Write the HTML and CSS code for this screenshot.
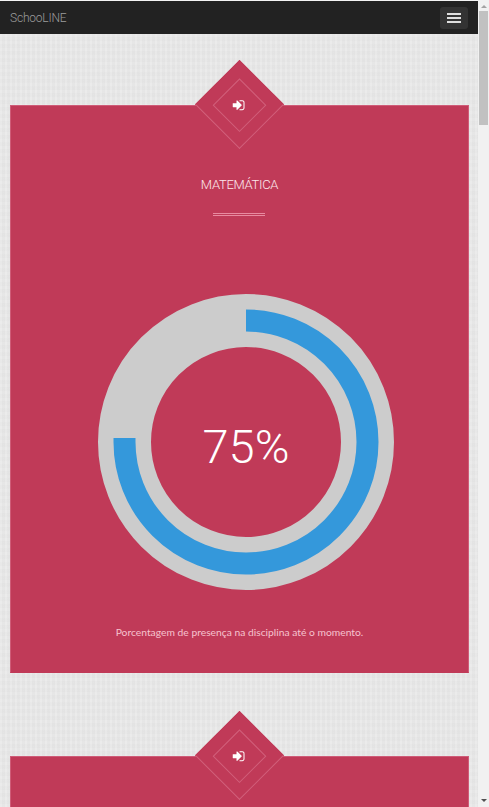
FILE: index.html
```html
<!DOCTYPE html>
<html lang="pt-BR">
<head>
  <meta charset="UTF-8" />
  <meta name="viewport" content="width=device-width, initial-scale=1.0">
  <title>SchooLINE</title>
  <link rel="stylesheet" href="styles.css">
</head>
<body>
  <div class="app">
    <div class="page">
      <nav class="navbar">
        <a class="brand" href="#">SchooLINE</a>
        <button class="toggle" type="button" aria-label="Menu">
          <span></span><span></span><span></span>
        </button>
      </nav>

      <main class="list">
        <section class="card">
          <div class="badge">
            <div class="badge-inner"></div>
            <svg class="badge-icon" viewBox="0 0 1792 1792"><path d="M1184 896q0 26-19 45l-544 544q-19 19-45 19t-45-19-19-45v-288h-448q-26 0-45-19t-19-45v-384q0-26 19-45t45-19h448v-288q0-26 19-45t45-19 45 19l544 544q19 19 19 45zm352-352v704q0 119-84.5 203.5t-203.5 84.5h-320q-13 0-22.5-9.5t-9.5-22.5q0-4-1-20t-.5-26.5 3-23.5 10-19.5 20.5-6.5h320q66 0 113-47t47-113v-704q0-66-47-113t-113-47h-312l-11.5-1-11.5-3-8-5.5-7-9-2-13.5q0-4-1-20t-.5-26.5 3-23.5 10-19.5 20.5-6.5h320q119 0 203.5 84.5t84.5 203.5z"/></svg>
          </div>
          <h2 class="card-title">MATEMÁTICA</h2>
          <div class="divider"></div>
          <div class="ring">
            <svg viewBox="0 0 296 296" width="296" height="296">
              <circle class="ring-track" cx="148" cy="148" r="121.5"/>
              <path class="ring-value" d="M148 26.5A121.5 121.5 0 1 1 26.5 148L26.5 144"/>
            </svg>
            <span class="ring-label">75%</span>
          </div>
          <p class="card-note">Porcentagem de presença na disciplina até o momento.</p>
        </section>

        <section class="card">
          <div class="badge">
            <div class="badge-inner"></div>
            <svg class="badge-icon" viewBox="0 0 1792 1792"><path d="M1184 896q0 26-19 45l-544 544q-19 19-45 19t-45-19-19-45v-288h-448q-26 0-45-19t-19-45v-384q0-26 19-45t45-19h448v-288q0-26 19-45t45-19 45 19l544 544q19 19 19 45zm352-352v704q0 119-84.5 203.5t-203.5 84.5h-320q-13 0-22.5-9.5t-9.5-22.5q0-4-1-20t-.5-26.5 3-23.5 10-19.5 20.5-6.5h320q66 0 113-47t47-113v-704q0-66-47-113t-113-47h-312l-11.5-1-11.5-3-8-5.5-7-9-2-13.5q0-4-1-20t-.5-26.5 3-23.5 10-19.5 20.5-6.5h320q119 0 203.5 84.5t84.5 203.5z"/></svg>
          </div>
        </section>
      </main>
    </div>

    <div class="scrollbar">
      <span class="arrow-up"></span>
      <div class="thumb"></div>
      <span class="arrow-down"></span>
    </div>
  </div>
</body>
</html>
```

FILE: styles.css
```css
html, body {
  margin: 0;
  height: 100%;
  overflow: hidden;
}
body {
  font-family: Roboto, "Liberation Sans", sans-serif;
  background: #e8e8e8;
}
.app {
  display: flex;
  height: 807px;
}
.page {
  flex: 1;
  min-width: 0;
  overflow: hidden;
  background-color: #e7e7e7;
  background-image:
    repeating-linear-gradient(90deg, rgba(255,255,255,0.13) 0 2px, rgba(0,0,0,0.008) 2px 5px),
    repeating-linear-gradient(0deg, rgba(255,255,255,0.05) 0 3px, rgba(0,0,0,0.006) 3px 7px);
}

.navbar {
  height: 33px;
  border-top: 1px solid #f4f4f4;
  background: #222;
  display: flex;
  align-items: center;
  justify-content: space-between;
  padding: 0 10px;
}
.brand {
  color: #9d9d9d;
  font-size: 12px;
  font-weight: 300;
  letter-spacing: -0.2px;
  text-decoration: none;
}
.toggle {
  width: 28px;
  height: 22px;
  background: #333;
  border: none;
  border-radius: 3px;
  padding: 0;
  display: flex;
  flex-direction: column;
  align-items: center;
  justify-content: center;
  gap: 2px;
}
.toggle span {
  width: 14px;
  height: 2px;
  background: #dedede;
}

.list {
  padding: 71px 9px 0 10px;
}
.card {
  position: relative;
  height: 568px;
  margin-bottom: 83px;
  box-sizing: border-box;
  background: #c03a58;
  border: 1px solid #cf5c78;
  border-bottom-color: #c03a58;
  text-align: center;
  padding-top: 69px;
}
.badge {
  position: absolute;
  left: 197px;
  top: -33px;
  width: 63px;
  height: 63px;
  box-sizing: border-box;
  background: #c03a58;
  border: 1px solid #d1607b;
  border-top-color: #c03a58;
  border-left-color: #c03a58;
  transform: rotate(45deg);
  display: flex;
  align-items: center;
  justify-content: center;
}
.badge-inner {
  width: 38px;
  height: 38px;
  box-sizing: border-box;
  border: 1px solid #d1607b;
}
.badge-icon {
  position: absolute;
  left: 50%;
  top: 50%;
  width: 14px;
  height: 14px;
  margin: -7px 0 0 -7px;
  fill: #fff;
  transform: rotate(-45deg);
}

.card-title {
  margin: 0;
  color: #fde8ec;
  font-size: 13px;
  font-weight: 300;
  letter-spacing: -0.3px;
  line-height: 20px;
}
.divider {
  width: 52px;
  height: 1px;
  margin: 18px 0 0 202px;
  border-top: 1px solid #e88aa0;
  border-bottom: 1px solid #e88aa0;
}
.ring {
  position: relative;
  width: 296px;
  height: 296px;
  margin: 78px 0 0 87px;
}
.ring svg {
  display: block;
}
.ring-track {
  fill: none;
  stroke: #ccc;
  stroke-width: 53;
}
.ring-value {
  fill: none;
  stroke: #3498db;
  stroke-width: 22;
}
.ring-label {
  position: absolute;
  left: 0;
  right: 0;
  top: 50%;
  transform: translateY(-50%);
  color: #fff;
  font-size: 47px;
  font-weight: 300;
  line-height: 56px;
  margin-top: 5px;
}
.card-note {
  margin: 34px 0 0;
  color: #f6c3cf;
  font-family: Lato, Roboto, sans-serif;
  font-size: 10.3px;
  line-height: 16px;
}

.scrollbar {
  width: 11px;
  background: #f1f1f1;
  display: flex;
  flex-direction: column;
  align-items: center;
}
.arrow-up, .arrow-down {
  width: 0;
  height: 0;
  border-left: 3px solid transparent;
  border-right: 3px solid transparent;
}
.arrow-up {
  margin-top: 5px;
  border-bottom: 3px solid #a3a3a3;
}
.arrow-down {
  margin-top: auto;
  margin-bottom: 5px;
  border-top: 3px solid #505050;
}
.thumb {
  width: 9px;
  height: 114px;
  margin-top: 3px;
  background: #c1c1c1;
}
```
